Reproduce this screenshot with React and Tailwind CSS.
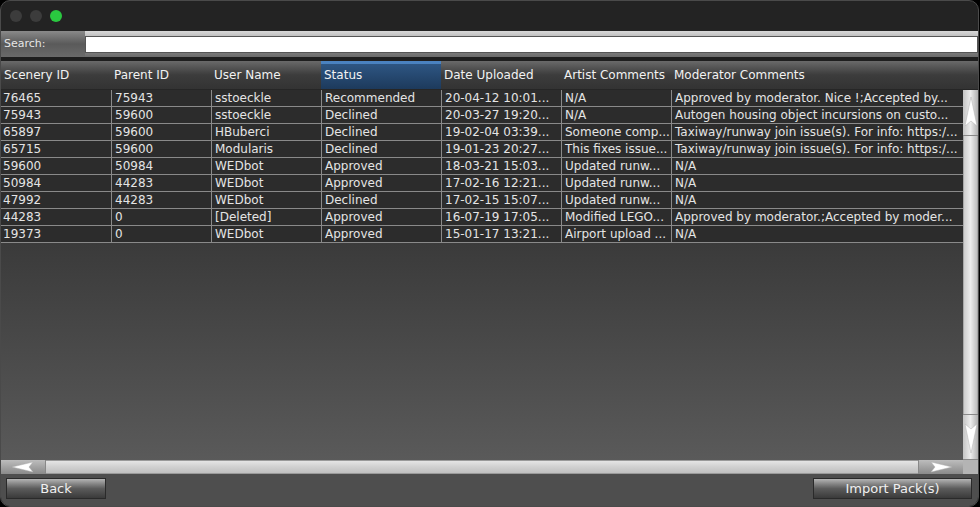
import React from "react";

const COLS = [
  { key: "id", label: "Scenery ID", w: 110 },
  { key: "parent", label: "Parent ID", w: 100 },
  { key: "user", label: "User Name", w: 110 },
  { key: "status", label: "Status", w: 120 },
  { key: "date", label: "Date Uploaded", w: 120 },
  { key: "artist", label: "Artist Comments", w: 110 },
  { key: "mod", label: "Moderator Comments", w: 293 },
];

const ROWS = [
  ["76465", "75943", "sstoeckle", "Recommended", "20-04-12 10:01...", "N/A", "Approved by moderator. Nice !;Accepted by..."],
  ["75943", "59600", "sstoeckle", "Declined", "20-03-27 19:20...", "N/A", "Autogen housing object incursions on custo..."],
  ["65897", "59600", "HBuberci", "Declined", "19-02-04 03:39...", "Someone comp...", "Taxiway/runway join issue(s). For info: https:/..."],
  ["65715", "59600", "Modularis", "Declined", "19-01-23 20:27...", "This fixes issue...", "Taxiway/runway join issue(s). For info: https:/..."],
  ["59600", "50984", "WEDbot", "Approved", "18-03-21 15:03...", "Updated runw...", "N/A"],
  ["50984", "44283", "WEDbot", "Approved", "17-02-16 12:21...", "Updated runw...", "N/A"],
  ["47992", "44283", "WEDbot", "Declined", "17-02-15 15:07...", "Updated runw...", "N/A"],
  ["44283", "0", "[Deleted]", "Approved", "16-07-19 17:05...", "Modified LEGO...", "Approved by moderator.;Accepted by moder..."],
  ["19373", "0", "WEDbot", "Approved", "15-01-17 13:21...", "Airport upload ...", "N/A"],
];

function Dot({ color }) {
  return <span className={`block h-[12px] w-[12px] rounded-full ${color}`} />;
}

function Arrow({ dir }) {
  // white wedge arrows like the classic scrollbar buttons
  const paths = {
    left: "M1 6 L22 1 L18 6 L22 11 Z",
    right: "M23 6 L2 1 L6 6 L2 11 Z",
    up: "M6 1 L12 30 L6 25 L0 30 Z",
    down: "M6 33 L12 4 L6 9 L0 4 Z",
  };
  const horiz = dir === "left" || dir === "right";
  return (
    <svg width={horiz ? 24 : 12} height={horiz ? 12 : 34} viewBox={horiz ? "0 0 24 12" : "0 0 12 34"}>
      <path d={paths[dir]} fill="#ffffff" stroke="#b0b0b0" strokeWidth="0.5" />
    </svg>
  );
}

function Button({ children, className }) {
  return (
    <div
      className={`flex h-[21px] items-center justify-center border border-[#2a2a2a] bg-gradient-to-b from-[#b4b4b4] via-[#5c5c5c] to-[#3a3a3a] text-[13px] text-[#f0f0f0] ${className}`}
    >
      {children}
    </div>
  );
}

export default function App() {
  return (
    <div className="h-[507px] w-[980px] overflow-hidden bg-black" style={{ fontFamily: '"DejaVu Sans", sans-serif' }}>
      <div className="flex h-full w-[979px] flex-col overflow-hidden rounded-[10px] border border-[#4a4a4a] bg-[#232323]">
        {/* title bar */}
        <div className="flex h-[30px] shrink-0 items-center gap-[8px] pl-[9px]">
          <Dot color="bg-[#3c3c3c]" />
          <Dot color="bg-[#3c3c3c]" />
          <Dot color="bg-[#2ac840]" />
        </div>

        {/* search row */}
        <div className="flex h-[26px] shrink-0 items-center bg-gradient-to-b from-[#d8d8d8] via-[#9a9a9a] to-[#6a6a6a]">
          <div className="flex h-full w-[84px] items-center bg-gradient-to-b from-[#8a8a8a] via-[#5a5a5a] to-[#6a6a6a] pl-[3px] text-[11px] text-[#e6e6e6]">
            Search:
          </div>
          <div className="h-[17px] flex-1 border border-[#555] bg-white" />
        </div>

        <div className="h-[4px] shrink-0 bg-[#1e1e1e]" />

        {/* header */}
        <div className="flex h-[28px] shrink-0 bg-gradient-to-b from-[#6a6a6a] via-[#3c3c3c] to-[#333]">
          {COLS.map((c) => (
            <div
              key={c.key}
              style={{ width: c.w }}
              className={`flex shrink-0 items-center pl-[3px] text-[12px] text-[#f2f2f2] ${
                c.key === "status" ? "border-t-[3px] border-[#4a82c0] bg-gradient-to-b from-[#2e5683] to-[#1d3a5c] pb-[3px]" : ""
              }`}
            >
              {c.label}
            </div>
          ))}
        </div>

        {/* body */}
        <div className="flex min-h-0 flex-1 bg-gradient-to-b from-[#262626] to-[#5c5c5c] pt-px">
          <div className="flex min-w-0 flex-1 flex-col">
            <div className="flex-1">
              {ROWS.map((r, i) => (
                <div key={i} className="flex h-[17px] border-b border-[#8a8a8a] bg-[#2c2c2c]">
                  {r.map((v, j) => (
                    <div
                      key={j}
                      style={{ width: COLS[j].w }}
                      className={`flex shrink-0 items-center overflow-hidden whitespace-nowrap pl-[2px] text-[12px] leading-none text-[#e4e4e4] ${
                        j > 0 ? "border-l border-[#8a8a8a] pl-[3px]" : ""
                      } ${j === COLS.length - 1 ? "border-r" : ""}`}
                    >
                      {v}
                    </div>
                  ))}
                </div>
              ))}
            </div>
            {/* horizontal scrollbar */}
            <div className="flex h-[14px] shrink-0 bg-gradient-to-b from-[#e8e8e8] via-[#d0d0d0] to-[#bdbdbd]">
              <div className="flex w-[45px] items-center justify-center border-r border-[#888] bg-gradient-to-b from-[#bdbdbd] to-[#8a8a8a]">
                <Arrow dir="left" />
              </div>
              <div className="flex-1 border-y border-[#9a9a9a]" />
              <div className="flex w-[45px] items-center justify-center border-l border-[#888] bg-gradient-to-b from-[#bdbdbd] to-[#8a8a8a]">
                <Arrow dir="right" />
              </div>
            </div>
          </div>
          {/* vertical scrollbar */}
          <div className="flex w-[15px] shrink-0 flex-col bg-gradient-to-r from-[#c8c8c8] via-[#ececec] to-[#b8b8b8]">
            <div className="flex h-[46px] items-center justify-center border-b border-[#888] bg-gradient-to-r from-[#c4c4c4] via-[#ececec] to-[#b0b0b0]">
              <Arrow dir="up" />
            </div>
            <div className="flex-1 border-x border-[#a8a8a8]" />
            <div className="flex h-[46px] items-center justify-center border-y border-[#888] bg-gradient-to-r from-[#c4c4c4] via-[#ececec] to-[#b0b0b0]">
              <Arrow dir="down" />
            </div>
            <div className="h-[14px] bg-[#b4b4b4]" />
          </div>
        </div>

        {/* footer */}
        <div className="flex h-[32px] shrink-0 items-start justify-between bg-[#4e4e4e] px-[5px] pt-[4px]">
          <Button className="w-[100px]">Back</Button>
          <Button className="mr-[1px] w-[159px]">Import Pack(s)</Button>
        </div>
      </div>
    </div>
  );
}
